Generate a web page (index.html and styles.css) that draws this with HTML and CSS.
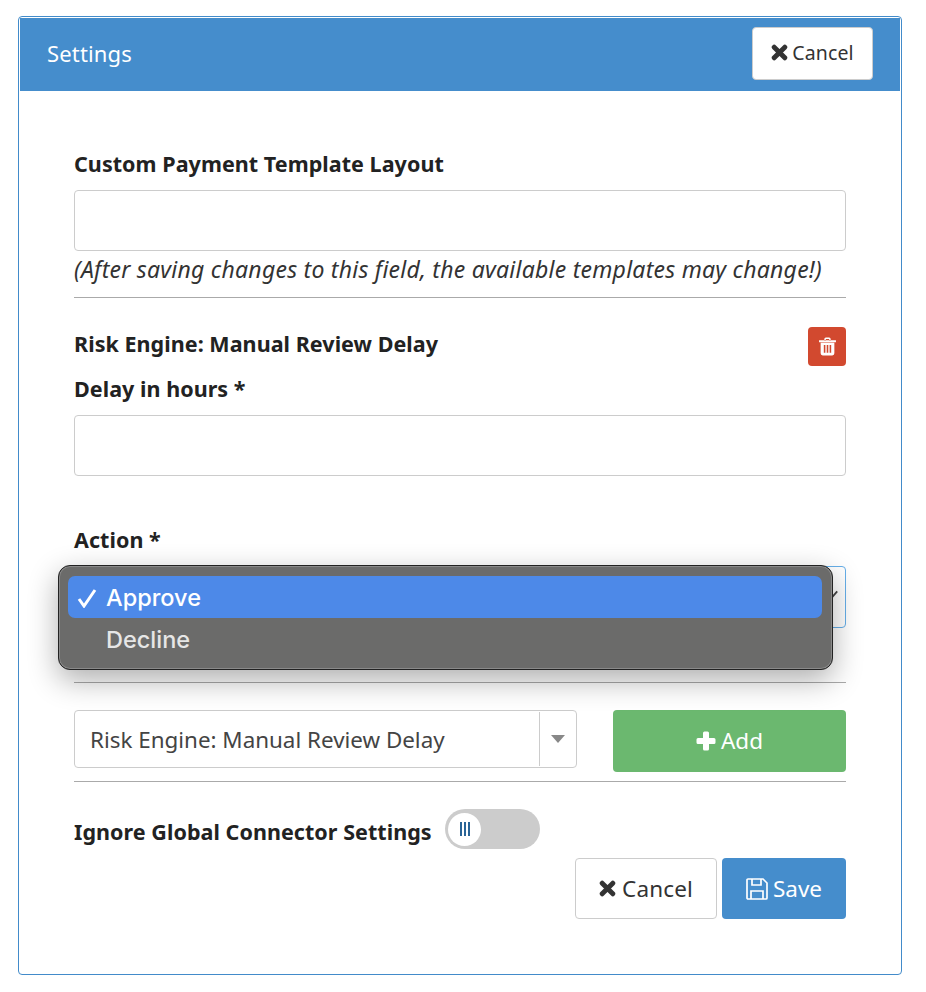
FILE: index.html
```html
<!DOCTYPE html>
<html lang="en">
<head>
<meta charset="utf-8">
<title>Settings</title>
<link rel="stylesheet" href="styles.css">
</head>
<body>
<section class="panel">
  <header class="panel-head">
    <h1 class="panel-title">Settings</h1>
    <button class="btn btn-default btn-head"><svg class="ico-x" viewBox="0 0 16 16"><path d="M3 3 13 13M13 3 3 13"/></svg>Cancel</button>
  </header>
  <div class="panel-body">
    <label class="label first">Custom Payment Template Layout</label>
    <input class="input" type="text">
    <p class="hint">(After saving changes to this field, the available templates may change!)</p>
    <hr class="rule rule-a">
    <div class="risk-row">
      <span class="label">Risk Engine: Manual Review Delay</span>
      <button class="btn-trash" aria-label="Delete"><svg viewBox="0 0 16 18" class="ico-trash"><path d="M0 3h16v2H0zM5 3.500V2q0-1.500 1.500-1.500h3Q11 .5 11 2v1.500H9.600V2H6.400v1.500zM1.500 5.500h13V15.500q0 2-2 2h-9q-2 0-2-2zM4.500 7.500v7.500h1.500V7.500zM7.250 7.500v7.500h1.500V7.500zM10 7.500v7.500h1.500V7.500z" fill-rule="evenodd"/></svg></button>
    </div>
    <label class="label delay">Delay in hours *</label>
    <input class="input" type="text">
    <label class="label action">Action *</label>
    <div class="select-wrap">
      <div class="select-focus"><svg class="caret" viewBox="0 0 10 10"><path d="M1 9 8 1" /></svg></div>
      <div class="menu">
        <div class="menu-item active"><svg class="check" viewBox="0 0 20 20"><path d="M2 11l5 7L18 2"/></svg>Approve</div>
        <div class="menu-item">Decline</div>
      </div>
    </div>
    <hr class="rule rule-b">
    <div class="add-row">
      <div class="combo"><span class="combo-text">Risk Engine: Manual Review Delay</span><span class="combo-arrow"><i class="tri"></i></span></div>
      <button class="btn btn-add"><svg class="ico-plus" viewBox="0 0 20 20"><path d="M7 2q0-1.500 1.500-1.500h3Q13 .5 13 2v5h5q1.500 0 1.500 1.500v3Q19.500 13 18 13h-5v5q0 1.500-1.500 1.500h-3Q7 19.500 7 18v-5H2Q.5 13 .5 11.500v-3Q.5 7 2 7h5z"/></svg><span class="add-text">Add</span></button>
    </div>
    <hr class="rule rule-c">
    <div class="toggle-row">
      <span class="label">Ignore Global Connector Settings</span>
      <span class="switch"><span class="knob"><i></i><i></i><i></i></span></span>
    </div>
    <div class="foot">
      <button class="btn btn-default btn-foot"><svg class="ico-x" viewBox="0 0 16 16"><path d="M3 3 13 13M13 3 3 13"/></svg>Cancel</button>
      <button class="btn btn-save"><svg class="ico-save" viewBox="0 0 22 22"><path d="M2 1h15l4 4v15a1 1 0 0 1-1 1H2a1 1 0 0 1-1-1V2a1 1 0 0 1 1-1zM6 1v6h9V1M5 21v-8h12v8"/></svg>Save</button>
    </div>
  </div>
</section>
</body>
</html>
```

FILE: styles.css
```css
* { box-sizing: border-box; }
html, body { margin: 0; padding: 0; background: #fff; }
body {
  padding: 16px 24px 0 18px;
  font-family: "Noto Sans", "Open Sans", sans-serif;
  color: #333;
}
.panel {
  height: 959px;
  border: 1px solid #428bca;
  border-radius: 4px;
  display: flex;
  flex-direction: column;
  overflow: hidden;
}
.panel-head {
  height: 73px;
  margin: 1px 1px 0;
  background: #458dcc;
  padding: 9px 27px 0 27px;
  display: flex;
  justify-content: space-between;
  align-items: flex-start;
  flex: none;
}
.panel-title {
  margin: 13px 0 0;
  font-size: 22px;
  line-height: 26px;
  font-weight: 400;
  color: #fff;
  letter-spacing: 0.15px;
}
.btn {
  font-family: inherit;
  font-size: 22.500px;
  border-radius: 4px;
  border: 1px solid transparent;
  display: flex;
  align-items: center;
  justify-content: center;
  padding: 0;
}
.btn-default { background: #fff; border-color: #ccc; color: #333; }
.btn-head { width: 121px; height: 53px; font-size: 19.500px; letter-spacing: 0.1px; padding-bottom: 2px; }
.ico-x { width: 17px; height: 17px; margin-right: 4px; fill: none; stroke: #333; stroke-width: 4.600; stroke-linecap: round; }
.panel-body { padding: 60px 55px 0; flex: 1; display: flex; flex-direction: column; }
.label {
  display: block;
  font-size: 21.500px;
  line-height: 26px;
  font-weight: 700;
  color: #222;
  letter-spacing: 0.05px;
  white-space: nowrap;
}
.input {
  display: block;
  width: 100%;
  height: 61px;
  border: 1px solid #ccc;
  border-radius: 4px;
  background: #fff;
  flex: none;
}
.label.first { margin-bottom: 13px; }
.hint {
  margin: 5px 0 0;
  font-size: 23px;
  line-height: 26px;
  font-style: italic;
  color: #333;
  letter-spacing: 0.24px;
  white-space: nowrap;
}
.rule { width: 100%; margin: 0; border: 0; border-top: 1px solid #aaa; flex: none; }
.rule-a { margin-top: 15px; }
.risk-row {
  margin-top: 28px;
  height: 40px;
  display: flex;
  justify-content: space-between;
  align-items: flex-start;
  padding-top: 6px;
}
.risk-row .label { margin-top: -1px; }
.btn-trash {
  width: 38px;
  height: 39px;
  margin-top: -5px;
  border: 0;
  border-radius: 4px;
  background: #d2492f;
  display: flex;
  align-items: center;
  justify-content: center;
  padding: 0;
}
.ico-trash { width: 17px; height: 19px; fill: #fff; }
.label.delay { margin: 10px 0 13px; }
.label.action { margin: 51px 0 0; }
.select-wrap { position: relative; height: 62px; margin-top: 13px; flex: none; }
.select-focus {
  height: 62px;
  border: 1px solid #66afe9;
  border-radius: 4px;
  background: #fff;
  position: relative;
}
.caret {
  position: absolute;
  right: 6px;
  top: 22px;
  width: 9px;
  height: 12px;
  fill: none;
  stroke: #444;
  stroke-width: 2;
}
.menu {
  position: absolute;
  left: -16px;
  top: -1px;
  width: 775px;
  height: 105px;
  padding: 10px 10px 0 9px;
  background: #6b6b6a;
  border: 1px solid #222;
  border-radius: 12px;
  box-shadow: inset 0 0 0 1px #8a8a8a, 0 10px 30px rgba(0,0,0,.32);
}
.menu-item {
  height: 42px;
  padding-left: 38px;
  display: flex;
  align-items: center;
  position: relative;
  font-family: Inter, sans-serif;
  font-size: 23.500px;
  font-weight: 500;
  color: #e6e6e6;
  border-radius: 7px;
}
.menu-item.active { background: #4d89e8; color: #fff; }
.check {
  position: absolute;
  left: 9px;
  top: 12px;
  width: 20px;
  height: 20px;
  fill: none;
  stroke: #fff;
  stroke-width: 3;
}
.rule-b { margin-top: 54px; }
.add-row { margin-top: 27px; display: flex; justify-content: space-between; flex: none; }
.combo {
  width: 503px;
  height: 58px;
  border: 1px solid #ccc;
  border-radius: 4px;
  display: flex;
  align-items: center;
  justify-content: space-between;
  padding: 1px 0;
}
.combo-text {
  padding-left: 15px;
  font-size: 22.400px;
  color: #444;
  white-space: nowrap;
}
.combo-arrow {
  width: 37px;
  height: 54px;
  border-left: 1px solid #ccc;
  display: flex;
  align-items: center;
  justify-content: center;
}
.tri {
  width: 0;
  height: 0;
  border-left: 7px solid transparent;
  border-right: 7px solid transparent;
  border-top: 8px solid #888;
}
.btn-add { width: 233px; height: 62px; background: #6bb86f; color: #fff; }
.add-text { margin-top: -2px; }
.ico-plus { width: 20px; height: 20px; fill: #fff; margin-right: 5px; }
.rule-c { margin-top: 9px; }
.toggle-row { margin-top: 27px; height: 40px; display: flex; align-items: center; gap: 13px; flex: none; }
.toggle-row .label { margin-top: 5px; }
.switch {
  width: 95px;
  height: 40px;
  border-radius: 20px;
  background: #ccc;
  padding: 3px;
  display: block;
}
.knob {
  width: 33px;
  height: 33px;
  margin-top: 0.500px;
  margin-left: 0.500px;
  border-radius: 50%;
  background: #fff;
  display: flex;
  align-items: center;
  justify-content: center;
  gap: 2px;
}
.knob i { width: 2px; height: 14px; background: #2a6496; display: block; }
.foot { margin-top: 9px; display: flex; justify-content: flex-end; gap: 5px; flex: none; }
.btn-foot { width: 142px; height: 61px; letter-spacing: 0.15px; }
.btn-foot .ico-x { margin-right: 6px; }
.btn-save { width: 124px; height: 61px; background: #458dcc; color: #fff; }
.ico-save { width: 22px; height: 22px; margin-right: 5px; fill: none; stroke: #fff; stroke-width: 1.700; }
```
